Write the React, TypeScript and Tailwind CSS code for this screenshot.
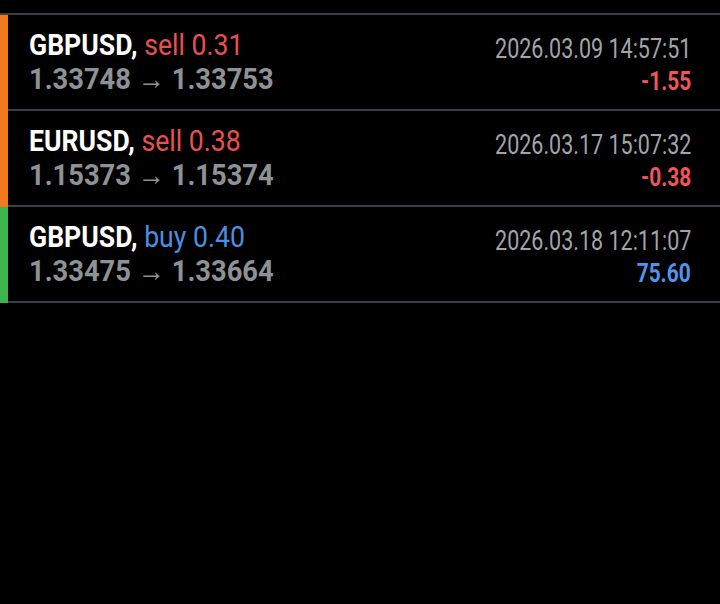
import React from "react";

type Trade = {
  symbol: string;
  side: "buy" | "sell";
  volume: string;
  open: string;
  close: string;
  time: string;
  profit: string;
};

const trades: Trade[] = [
  { symbol: "GBPUSD", side: "sell", volume: "0.31", open: "1.33748", close: "1.33753", time: "2026.03.09 14:57:51", profit: "-1.55" },
  { symbol: "EURUSD", side: "sell", volume: "0.38", open: "1.15373", close: "1.15374", time: "2026.03.17 15:07:32", profit: "-0.38" },
  { symbol: "GBPUSD", side: "buy", volume: "0.40", open: "1.33475", close: "1.33664", time: "2026.03.18 12:11:07", profit: "75.60" },
];

function Row({ t }: { t: Trade }) {
  const sell = t.side === "sell";
  return (
    <div className="flex h-[96px]">
      <div className={sell ? "w-2 bg-[#f07a1d]" : "w-2 bg-[#3db54a]"} />
      <div className="flex flex-1 justify-between border-b-2 border-[#3e3f44] pl-[21px] pr-[29px] pt-[13px]">
        <div className="flex flex-col">
          <div className="h-[34px] origin-left scale-x-[0.887] whitespace-nowrap text-[30px] leading-[34px]">
            <span className="font-bold text-white">{t.symbol}, </span>
            <span className={sell ? "text-[#ea5050]" : "text-[#4b8fe2]"}>
              {t.side} {t.volume}
            </span>
          </div>
          <div className="h-[34px] origin-left scale-x-[0.91] whitespace-nowrap text-[30px] font-bold leading-[34px] text-[#8e9297]">
            {t.open} → {t.close}
          </div>
        </div>
        <div className="flex flex-col items-end">
          <div className="mt-[6px] h-[30px] origin-right scale-x-[0.797] whitespace-nowrap text-[27px] leading-[30px] text-[#a1a4a9]">
            {t.time}
          </div>
          <div className={"mt-[3px] h-[30px] origin-right scale-x-[0.835] whitespace-nowrap text-[25px] font-bold leading-[30px] " + (sell ? "text-[#f05558]" : "text-[#4f95ee]")}>
            {t.profit}
          </div>
        </div>
      </div>
    </div>
  );
}

export default function App() {
  return (
    <div
      className="h-[604px] w-[720px] overflow-hidden bg-black pt-[13px]"
      style={{ fontFamily: "Roboto, 'Liberation Sans', sans-serif" }}
    >
      <div className="h-[2px] bg-[#3e3f44]" />
      {trades.map((t, i) => (
        <Row key={i} t={t} />
      ))}
    </div>
  );
}
